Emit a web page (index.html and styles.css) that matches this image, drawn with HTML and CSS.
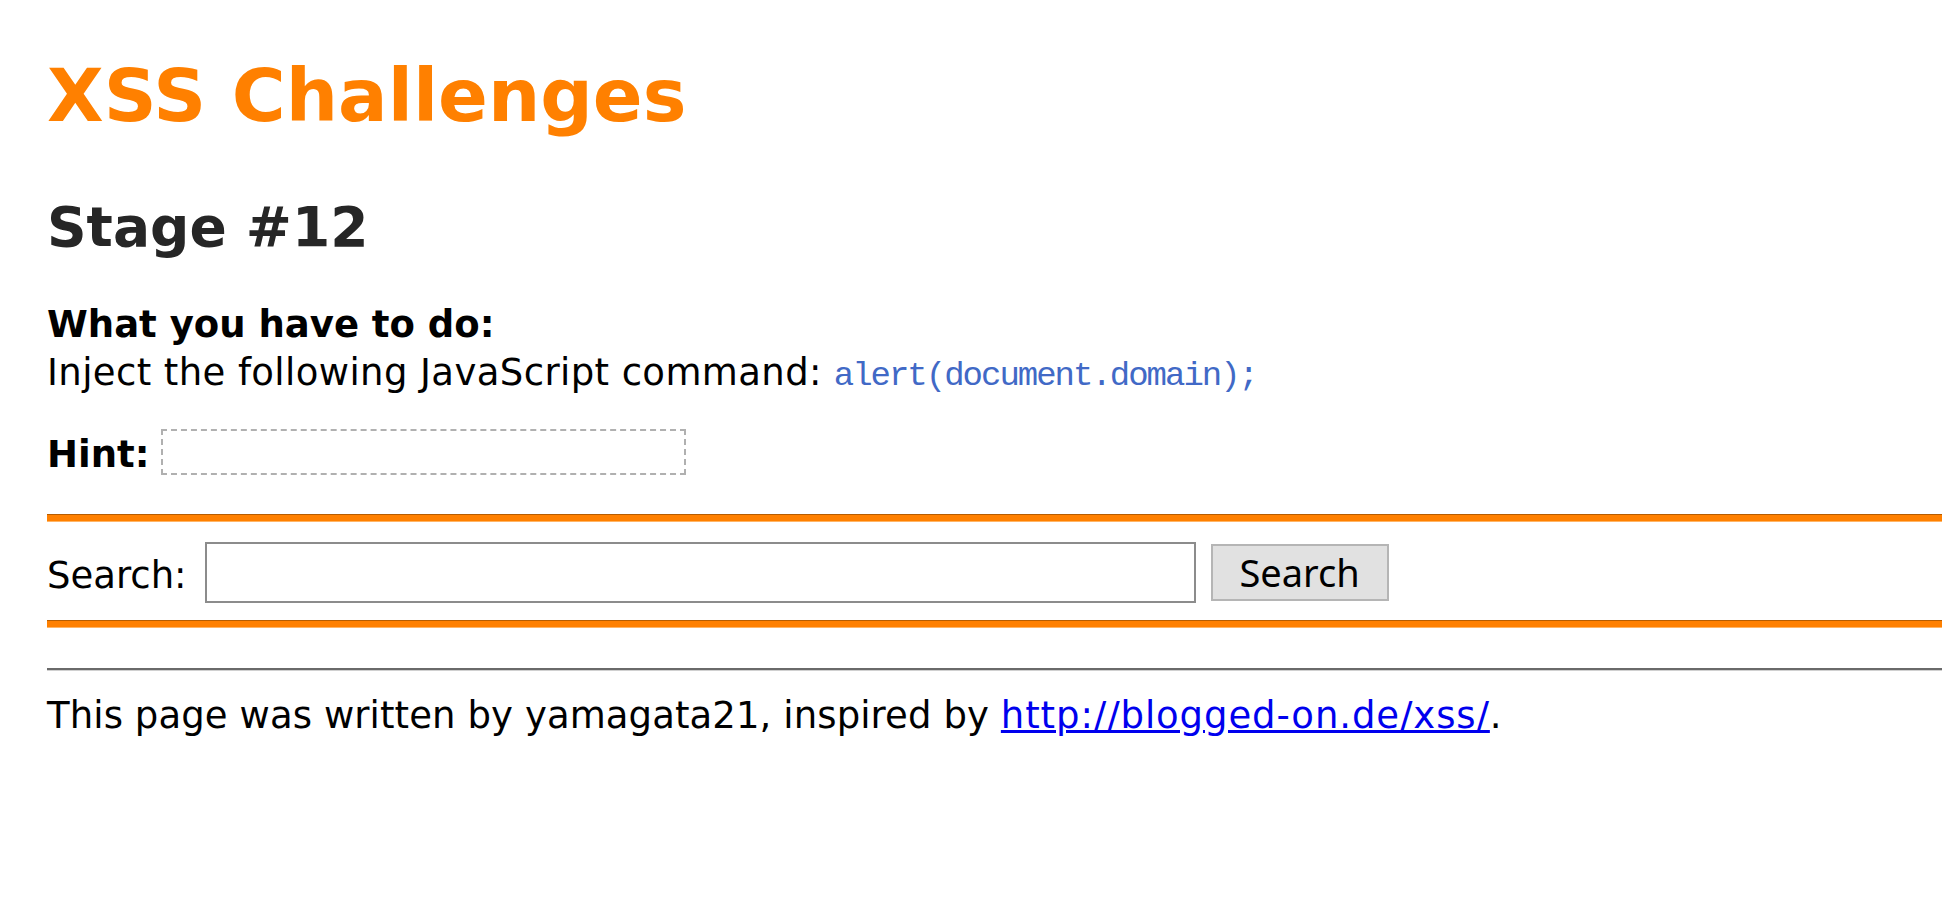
FILE: index.html
```html
<!DOCTYPE html>
<html lang="en">
<head>
<meta charset="utf-8">
<title>XSS Challenges - Stage #12</title>
<link rel="stylesheet" href="styles.css">
</head>
<body class="page">
<h1 class="title">XSS Challenges</h1>
<h2 class="stage">Stage #12</h2>
<div class="task">
  <b class="task-label">What you have to do:</b><br>
  <span class="task-text">Inject the following JavaScript command:</span> <code class="cmd">alert(document.domain);</code>
</div>
<div class="hint-row">
  <b class="hint-label">Hint:</b>
  <span class="hint-box"></span>
</div>
<hr class="bar bar-top">
<form class="search-row" action="#">
  <label class="search-label" for="q">Search:</label>
  <input class="search-input" id="q" type="text">
  <button class="search-btn" type="button">Search</button>
</form>
<hr class="bar bar-bottom">
<hr class="rule">
<p class="footer">This page was written by yamagata21, inspired by <a class="footer-link" href="#">http://blogged-on.de/xss/</a>.</p>
</body>
</html>
```

FILE: styles.css
```css
html {
  background: #ffffff;
}

.page {
  margin: 0;
  padding: 51px 0 0 47px;
  font-family: "DejaVu Sans", Verdana, sans-serif;
  font-size: 37px;
  line-height: 48px;
  color: #000000;
  background: #ffffff;
}

.title {
  margin: 0;
  font-size: 73.5px;
  line-height: 89px;
  font-weight: bold;
  color: #ff8000;
}

.stage {
  margin: 54px 0 0;
  font-size: 55px;
  line-height: 66px;
  font-weight: bold;
  color: #262626;
}

.task {
  margin-top: 41px;
}

.task-label {
  font-weight: bold;
}

.task-text {
  letter-spacing: 0.4px;
}

.cmd {
  font-family: "Liberation Mono", "Courier New", monospace;
  font-size: 34px;
  letter-spacing: -2px;
  color: #4169c6;
}

.hint-row {
  display: flex;
  align-items: flex-start;
  gap: 12px;
  margin-top: 31px;
}

.hint-label {
  font-weight: bold;
}

.hint-box {
  box-sizing: border-box;
  width: 525px;
  height: 46px;
  margin-top: -2px;
  border: 2px dashed #b0b0b0;
}

.bar {
  box-sizing: border-box;
  height: 8px;
  margin: 0;
  border: 0;
  border-top: 1px solid #b65c00;
  border-bottom: 1px solid #ffb566;
  background: #ff8000;
}

.bar-top {
  margin-top: 35px;
}

.bar-bottom {
  margin-top: 17px;
}

.search-row {
  display: flex;
  align-items: center;
  margin: 20px 0 0;
}

.search-label {
  margin-top: 7px;
  margin-right: 18px;
}

.search-input {
  box-sizing: border-box;
  width: 991px;
  height: 61px;
  margin: 0;
  padding: 0 6px;
  border: 2px solid #8c8c8c;
  background: #ffffff;
  font-family: "DejaVu Sans", sans-serif;
  font-size: 30px;
}

.search-btn {
  box-sizing: border-box;
  width: 178px;
  height: 57px;
  margin: 0 0 0 15px;
  padding: 0;
  border: 2px solid #b5b5b5;
  background: #e1e1e1;
  color: #000000;
  font-family: "Noto Sans", "Open Sans", sans-serif;
  font-size: 38px;
  line-height: 53px;
}

.rule {
  box-sizing: border-box;
  height: 3px;
  margin: 40px 0 0;
  border: 0;
  border-top: 2px solid #6a6a6a;
  border-bottom: 1px solid #d0d0d0;
}

.footer {
  margin: 21px 0 0;
  letter-spacing: 0.1px;
}

.footer-link {
  color: #0000ee;
  text-decoration: underline;
  letter-spacing: 0.9px;
}
```
